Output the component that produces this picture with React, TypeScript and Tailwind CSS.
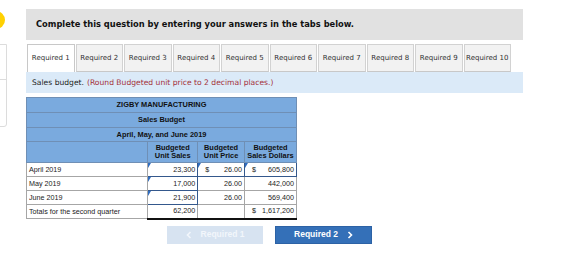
import React from "react";

const tabs = Array.from({ length: 10 }, (_, i) => `Required ${i + 1}`);

function Mark() {
  return (
    <div className="absolute left-0 top-0 w-0 h-0 border-t-[5px] border-t-[#2f6cc0] border-r-[3px] border-r-transparent" />
  );
}

function Chev({ left }: { left?: boolean }) {
  return (
    <svg width="6" height="8" viewBox="0 0 6 8" className="shrink-0">
      <path
        d={left ? "M4.5 1 L1.5 4 L4.5 7" : "M1.5 1 L4.5 4 L1.5 7"}
        fill="none"
        stroke="currentColor"
        strokeWidth="1.6"
      />
    </svg>
  );
}

export default function App() {
  const verdana = { fontFamily: '"DejaVu Sans", Verdana, sans-serif' };
  const arial = { fontFamily: '"Liberation Sans", Arial, sans-serif' };
  const blueCell = "border border-[#6f8fb5] bg-[#7aaade] text-[#111] font-bold text-center text-[7.4px]";
  const cell = "border border-[#a6a6a6] h-[14px] leading-[12px] px-[2px]";
  const inCell = "relative border border-[#34588c] h-[14px] leading-[12px] px-[2px]";
  return (
    <div className="w-[577px] h-[280px] bg-white overflow-hidden flex">
      <div className="w-[26px] shrink-0 flex flex-col">
        <div className="w-[20px] h-[18px] rounded-full bg-[#ffd102] ml-[-15px] mt-[11px]" />
        <div className="w-[20px] h-[83px] ml-[-13px] mt-[15px] border border-[#dcdcdc] rounded-br-[3px] flex flex-col">
          <div className="h-[35px] border-b border-[#dcdcdc]" />
        </div>
      </div>
      <div className="w-[497px] shrink-0 pt-[9px]">
        <div
          className="h-[31px] bg-[#e1e1e1] flex items-center pl-[10px] text-[8.3px] font-bold text-[#111]"
          style={verdana}
        >
          Complete this question by entering your answers in the tabs below.
        </div>
        <div className="mt-[4px] flex gap-[1px] pl-[1px]" style={verdana}>
          {tabs.map((t, i) => (
            <div
              key={t}
              className={
                "w-[47.5px] h-[28px] flex items-center justify-center text-[7px] text-[#333] border-t border-l border-r " +
                (i === 0
                  ? "bg-white border-[#c8c8c8]"
                  : "bg-[#f2f2f2] border-[#d2d2d2] border-b border-b-[#c8c8c8]")
              }
            >
              {t}
            </div>
          ))}
        </div>
        <div
          className="h-[21px] bg-[#dbeaf8] flex items-center pl-[6px] text-[7.6px]"
          style={verdana}
        >
          <span className="text-[#222]">Sales budget.</span>
          <span className="text-[#a3303a] ml-[3px]">(Round Budgeted unit price to 2 decimal places.)</span>
        </div>
        <table
          className="mt-[4px] border-collapse text-[7.2px] text-[#222] w-[271px]"
          style={arial}
        >
          <colgroup>
            <col className="w-[122px]" />
            <col className="w-[50px]" />
            <col className="w-[47px]" />
            <col className="w-[52px]" />
          </colgroup>
          <tbody>
            <tr className="h-[15px]">
              <td colSpan={4} className={blueCell}>ZIGBY MANUFACTURING</td>
            </tr>
            <tr className="h-[15px]">
              <td colSpan={4} className={blueCell}>Sales Budget</td>
            </tr>
            <tr className="h-[14px]">
              <td colSpan={4} className={blueCell}>April, May, and June 2019</td>
            </tr>
            <tr className="h-[21px]">
              <td className={blueCell}></td>
              <td className={blueCell + " leading-[8px]"}>Budgeted<br />Unit Sales</td>
              <td className={blueCell + " leading-[8px]"}>Budgeted<br />Unit Price</td>
              <td className={blueCell + " leading-[8px]"}>Budgeted<br />Sales Dollars</td>
            </tr>
            <tr>
              <td className={cell}>April 2019</td>
              <td className={inCell + " text-right"}><Mark />23,300</td>
              <td className={inCell}>
                <Mark />
                <div className="flex justify-between pl-[5px]"><span>$</span><span>26.00</span></div>
              </td>
              <td className={inCell}>
                <Mark />
                <div className="flex justify-between pl-[5px]"><span>$</span><span>605,800</span></div>
              </td>
            </tr>
            <tr>
              <td className={cell}>May 2019</td>
              <td className={inCell + " text-right"}><Mark />17,000</td>
              <td className={cell + " text-right"}>26.00</td>
              <td className={cell + " text-right"}>442,000</td>
            </tr>
            <tr>
              <td className={cell}>June 2019</td>
              <td className={inCell + " text-right"}><Mark />21,900</td>
              <td className={cell + " text-right"}>26.00</td>
              <td className={cell + " text-right"}>569,400</td>
            </tr>
            <tr>
              <td className={cell}>Totals for the second quarter</td>
              <td className={cell + " text-right border-b-[2px] border-b-[#111]"}>62,200</td>
              <td className={cell + " border-b-[2px] border-b-[#111]"}></td>
              <td className={cell + " border-b-[2px] border-b-[#111]"}>
                <div className="flex justify-between pl-[5px]"><span>$</span><span>1,617,200</span></div>
              </td>
            </tr>
          </tbody>
        </table>
        <div className="mt-[6px] flex gap-[12px] pl-[141px]" style={arial}>
          <div className="w-[96px] h-[18px] bg-[#d7e3f1] text-[#f2f6fb] text-[8.5px] font-bold flex items-center justify-center gap-[9px]">
            <Chev left />
            <span>Required 1</span>
          </div>
          <div className="w-[97px] h-[18px] bg-[#3470b8] border border-[#2c62a5] text-white text-[8.5px] font-bold flex items-center justify-center gap-[9px]">
            <span>Required 2</span>
            <Chev />
          </div>
        </div>
      </div>
    </div>
  );
}
